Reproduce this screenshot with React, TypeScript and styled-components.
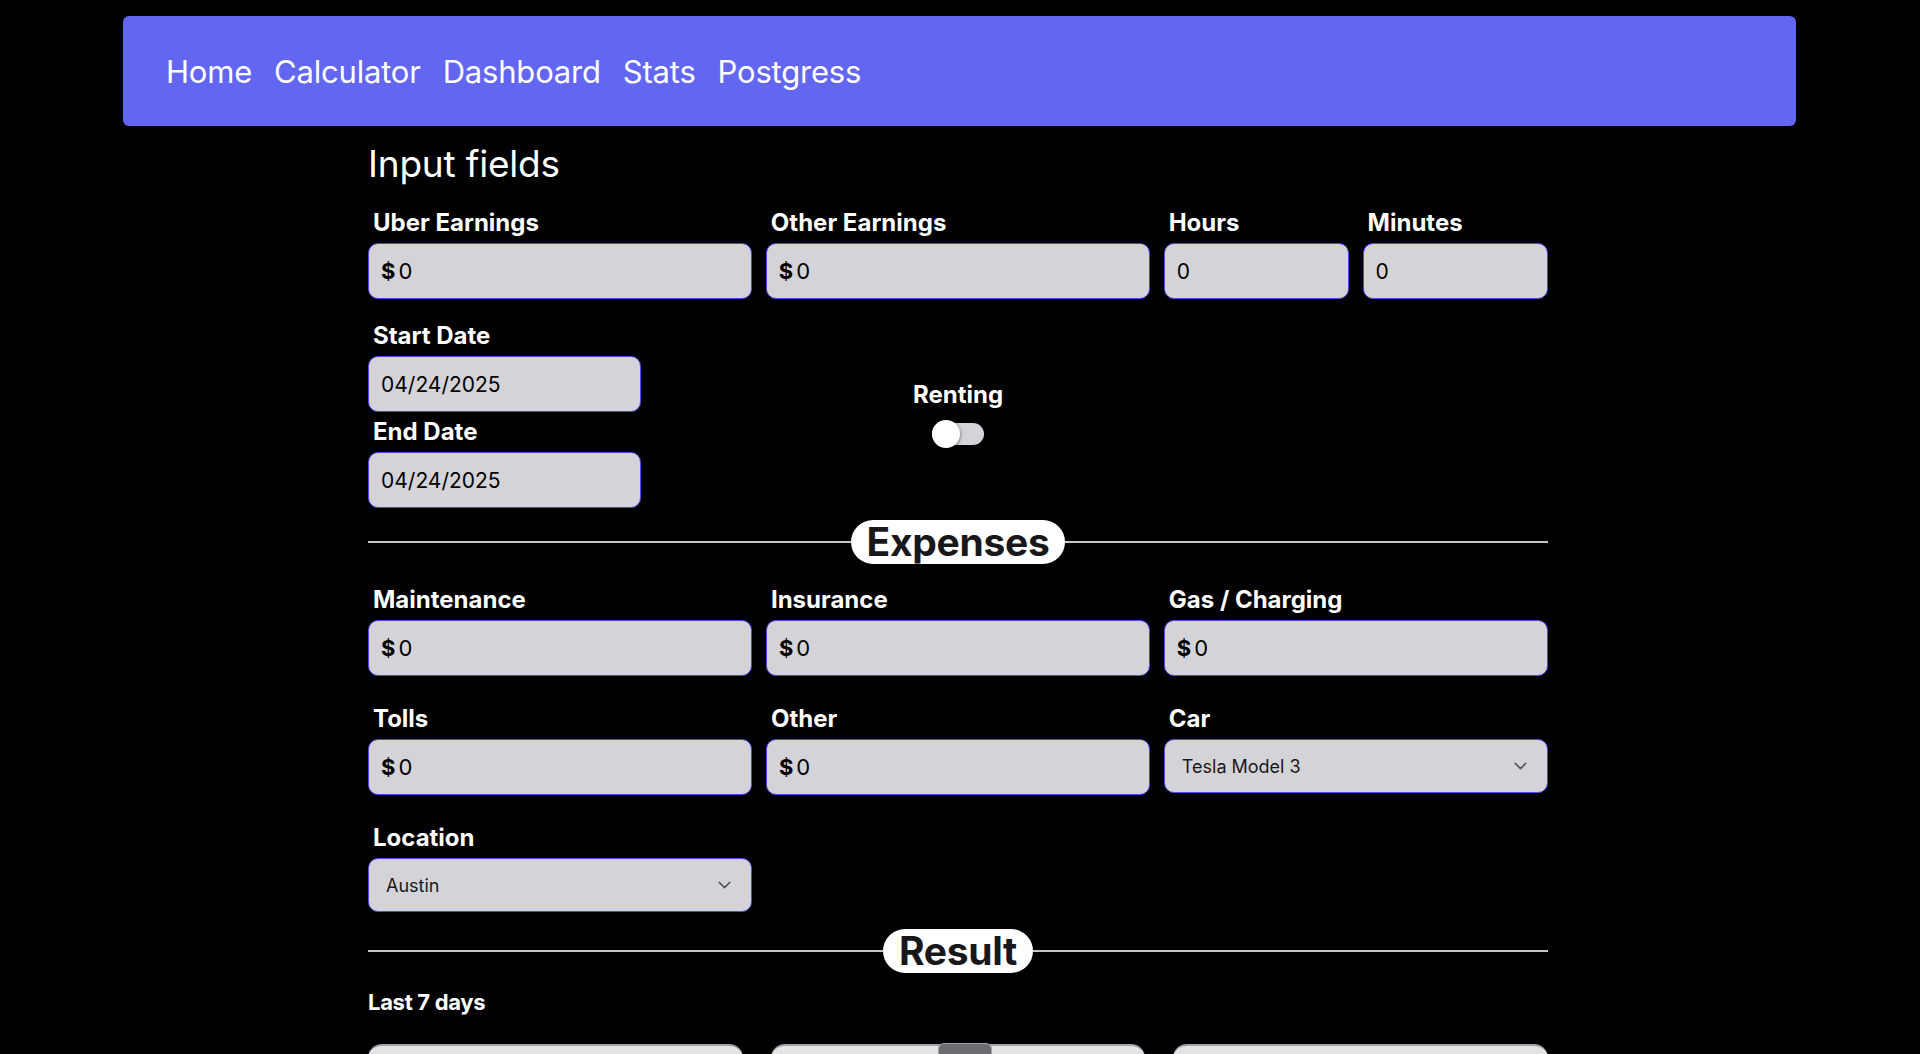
import React from "react";
import styled, { createGlobalStyle } from "styled-components";

const GlobalStyle = createGlobalStyle`
    html, body {
        margin: 0;
        padding: 0;
        background: #000;
        overflow: hidden;
    }
    body {
        font-family: Inter, "Noto Sans", "Liberation Sans", sans-serif;
        color: #fff;
    }
    * {
        box-sizing: border-box;
    }
`;

const moneyTop = ["Uber Earnings", "Other Earnings"];
const expenses = ["Maintenance", "Insurance", "Gas / Charging", "Tolls", "Other"];

const App = () => {
    return (
        <Page>
            <GlobalStyle />
            <NavBar>
                <NavLink>Home</NavLink>
                <NavLink>Calculator</NavLink>
                <NavLink>Dashboard</NavLink>
                <NavLink>Stats</NavLink>
                <NavLink>Postgress</NavLink>
            </NavBar>

            <Content>
                <Heading>Input fields</Heading>

                <TopGrid>
                    {moneyTop.map((label) => (
                        <Field key={label} span={2}>
                            <Label>{label}</Label>
                            <MoneyInput />
                        </Field>
                    ))}
                    <Field span={1}>
                        <Label>Hours</Label>
                        <TextBox defaultValue="0" />
                    </Field>
                    <Field span={1}>
                        <Label>Minutes</Label>
                        <TextBox defaultValue="0" />
                    </Field>
                </TopGrid>

                <DateGrid>
                    <DateColumn>
                        <Label>Start Date</Label>
                        <TextBox defaultValue="04/24/2025" narrow />
                        <Label>End Date</Label>
                        <TextBox defaultValue="04/24/2025" narrow />
                    </DateColumn>
                    <ToggleGroup>
                        <Label>Renting</Label>
                        <Switch>
                            <Thumb />
                        </Switch>
                    </ToggleGroup>
                </DateGrid>

                <Divider top={12}>
                    <Pill>Expenses</Pill>
                </Divider>

                <ExpenseGrid>
                    {expenses.map((label) => (
                        <Field key={label}>
                            <Label>{label}</Label>
                            <MoneyInput />
                        </Field>
                    ))}
                    <Field>
                        <Label>Car</Label>
                        <SelectBox value="Tesla Model 3" />
                    </Field>
                    <Field>
                        <Label>Location</Label>
                        <SelectBox value="Austin" />
                    </Field>
                </ExpenseGrid>

                <Divider top={17}>
                    <Pill>Result</Pill>
                </Divider>

                <SubTitle>Last 7 days</SubTitle>
                <CardRow>
                    <Card />
                    <Card />
                    <Card />
                </CardRow>
            </Content>
            <Handle />
        </Page>
    );
};

export default App;

const MoneyInput = () => (
    <InputShell>
        <Dollar>$</Dollar>
        <BareInput defaultValue="0" />
    </InputShell>
);

const SelectBox = ({ value }: { value: string }) => (
    <SelectWrap>
        <Select defaultValue={value}>
            <option>{value}</option>
        </Select>
        <Chevron viewBox="0 0 24 24" width="21" height="21">
            <path d="M6 9l6 6 6-6" fill="none" stroke="#52525b" strokeWidth="1.7" strokeLinecap="round" strokeLinejoin="round" />
        </Chevron>
    </SelectWrap>
);

const Page = styled.div`
    position: relative;
    height: 100vh;
    overflow: hidden;
    padding-top: 16px;
`;

const NavBar = styled.nav`
    display: flex;
    align-items: center;
    gap: 22px;
    height: 110px;
    margin: 0 124px 0 123px;
    padding-left: 43px;
    background: #6366f1;
    border-radius: 6px;
`;

const NavLink = styled.a`
    font-size: 31px;
    letter-spacing: -0.2px;
    color: #fff;
    cursor: pointer;
`;

const Content = styled.main`
    width: 1180px;
    margin: 0 0 0 calc(50% - 592px);
`;

const Heading = styled.h1`
    margin: 16px 0 0;
    font-size: 37px;
    line-height: 44px;
    font-weight: 400;
    letter-spacing: -0.2px;
`;

const TopGrid = styled.div`
    display: grid;
    grid-template-columns: repeat(6, 1fr);
    gap: 13.5px;
    margin-top: 22px;
`;

const Field = styled.div<{ span?: number }>`
    display: flex;
    flex-direction: column;
    gap: 5px;
    grid-column: span ${(p) => p.span ?? 1};
`;

const Label = styled.label`
    padding: 0 5px;
    font-size: 24px;
    line-height: 30px;
    font-weight: 700;
    color: #fff;
`;

const InputShell = styled.div`
    display: flex;
    align-items: center;
    height: 56px;
    padding: 0 12px;
    background: #d4d4d8;
    border: 1.5px solid #4f46e5;
    border-radius: 10px;
`;

const Dollar = styled.span`
    font-size: 22px;
    font-weight: 700;
    color: #000;
    margin-right: 3px;
`;

const BareInput = styled.input`
    flex: 1;
    min-width: 0;
    border: none;
    background: transparent;
    outline: none;
    padding: 0;
    font-family: inherit;
    font-size: 22px;
    color: #000;
`;

const TextBox = styled.input<{ narrow?: boolean }>`
    width: ${(p) => (p.narrow ? "273px" : "100%")};
    height: 56px;
    padding: 0 12px;
    background: #d4d4d8;
    border: 1.5px solid #4f46e5;
    border-radius: 10px;
    outline: none;
    font-family: inherit;
    font-size: 21px;
    color: #000;
`;

const DateGrid = styled.div`
    display: grid;
    grid-template-columns: repeat(3, 1fr);
    gap: 13.5px;
    margin-top: 22px;
`;

const DateColumn = styled.div`
    display: flex;
    flex-direction: column;
    gap: 5px;
`;

const ToggleGroup = styled.div`
    display: flex;
    flex-direction: column;
    align-items: center;
    align-self: center;
    gap: 13px;
    padding-bottom: 4px;
`;

const Switch = styled.div`
    position: relative;
    width: 52px;
    height: 22px;
    background: #d4d4d8;
    border-radius: 11px;
`;

const Thumb = styled.span`
    position: absolute;
    left: 0;
    top: -3px;
    width: 28px;
    height: 28px;
    border-radius: 50%;
    background: #fff;
    box-shadow: 1px 1px 3px rgba(0, 0, 0, 0.35);
`;

const Divider = styled.div<{ top: number }>`
    display: flex;
    align-items: center;
    margin-top: ${(p) => p.top}px;

    &::before,
    &::after {
        content: "";
        flex: 1;
        height: 2px;
        background: #c4c4cc;
    }
`;

const Pill = styled.h2`
    margin: 0;
    height: 44px;
    padding: 0 16px;
    background: #fff;
    border-radius: 999px;
    font-size: 39px;
    line-height: 44px;
    font-weight: 700;
    letter-spacing: -0.3px;
    color: #18181b;
`;

const ExpenseGrid = styled.div`
    display: grid;
    grid-template-columns: repeat(3, 1fr);
    column-gap: 13.5px;
    row-gap: 28px;
    margin-top: 21px;
    align-items: start;
`;

const SelectWrap = styled.div`
    position: relative;
`;

const Select = styled.select`
    width: 100%;
    height: 54px;
    padding: 0 44px 0 17px;
    appearance: none;
    background: #d4d4d8;
    border: 1.5px solid #4f46e5;
    border-radius: 10px;
    outline: none;
    font-family: inherit;
    font-size: 18px;
    color: #18181b;
`;

const Chevron = styled.svg`
    position: absolute;
    right: 17px;
    top: 50%;
    transform: translateY(-50%);
    pointer-events: none;
`;

const SubTitle = styled.h3`
    margin: 16px 0 0;
    font-size: 22px;
    line-height: 26px;
    font-weight: 700;
    letter-spacing: -0.3px;
`;

const CardRow = styled.div`
    display: grid;
    grid-template-columns: repeat(3, 1fr);
    gap: 28px;
    margin-top: 29px;
`;

const Card = styled.div`
    height: 200px;
    background: #e4e4e7;
    border-top: 2px solid #a1a1aa;
    border-radius: 14px;
`;

const Handle = styled.div`
    position: absolute;
    left: 938px;
    bottom: 0;
    width: 54px;
    height: 11px;
    background: #6b6b70;
    border: 1px solid #a1a1aa;
    border-bottom: none;
    border-radius: 6px 6px 0 0;
`;
